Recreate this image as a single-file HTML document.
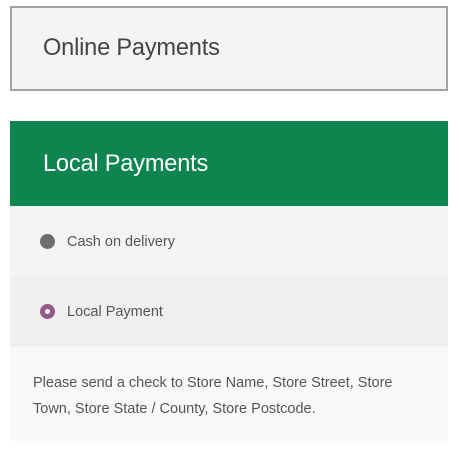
<!DOCTYPE html>
<html><head><style>
body{margin:0;width:459px;height:455px;background:#fff;font-family:"Liberation Sans",sans-serif;position:relative;overflow:hidden}
div{position:absolute;box-sizing:border-box}
.b1{left:10px;top:6px;width:438px;height:85px;border:2px solid #a3a3a3;background:#f4f4f4}
.h{font-size:23.6px;font-weight:300;letter-spacing:-0.2px}
.g{left:10px;top:121px;width:438px;height:85px;background:#0e854f}
.r1{left:10px;top:206px;width:438px;height:71px;background:#f4f4f4}
.r2{left:10px;top:277px;width:438px;height:70px;background:#efefef}
.d{left:10px;top:347px;width:438px;height:94px;background:#f9f9f9}
.t{font-size:14.5px;color:#555}
</style></head><body>
<div class="b1"></div>
<div class="h" style="left:43px;top:35px;color:#444">Online Payments</div>
<div class="g"></div>
<div class="h" style="left:43px;top:151px;color:#fff">Local Payments</div>
<div class="r1"></div>
<div style="left:40px;top:234px;width:15px;height:15px;border-radius:50%;background:#6d6d6d"></div>
<div class="t" style="left:67px;top:234px">Cash on delivery</div>
<div class="r2"></div>
<div style="left:40px;top:304px;width:15px;height:15px;border-radius:50%;background:#96588a"></div>
<div style="left:45px;top:309px;width:5px;height:5px;border-radius:50%;background:#fff"></div>
<div class="t" style="left:67px;top:304px">Local Payment</div>
<div class="d"></div>
<div class="t" style="left:33px;top:370px;width:400px;line-height:26px">Please send a check to Store Name, Store Street, Store Town, Store State / County, Store Postcode.</div>
</body></html>
